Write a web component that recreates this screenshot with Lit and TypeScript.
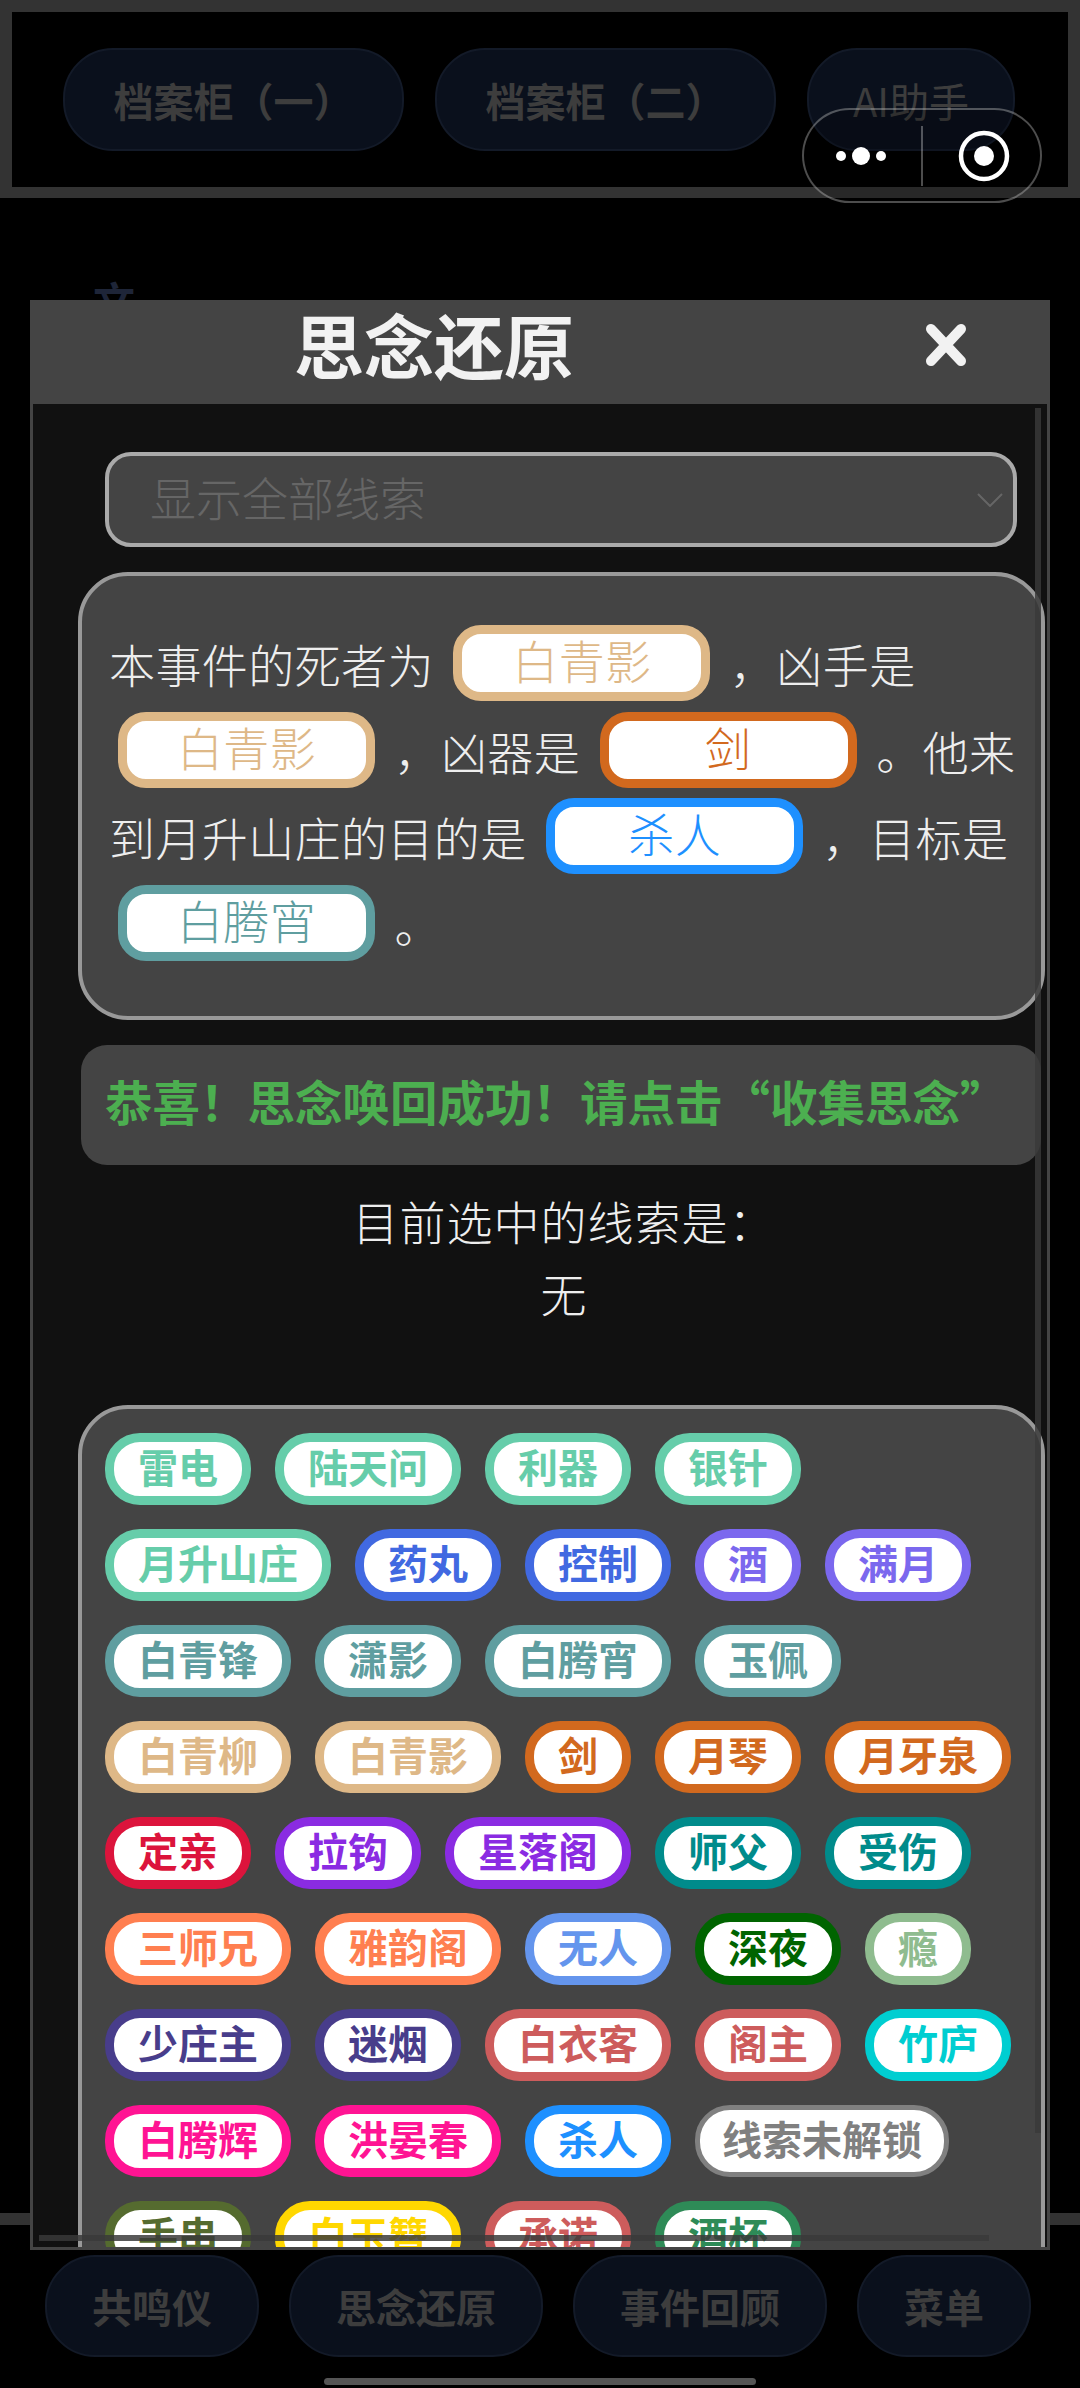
import { LitElement, html, css } from "lit";
import { customElement } from "lit/decorators.js";
import { classMap } from "lit/directives/class-map.js";

type Tag = [string, string];
const G = "#66cdaa", RB = "#4169e1", MS = "#7b68ee", CB = "#5f9ea0", BW = "#deb887", CH = "#d2691e",
  CR = "#dc143c", BV = "#8a2be2", DC = "#008b8b", CO = "#ff7f50", CF = "#6495ed", DG = "#006400",
  DS = "#8fbc8f", DB = "#483d8b", IR = "#cd5c5c", DT = "#00ced1", DP = "#ff1493", DD = "#1e90ff",
  GR = "#808080", OL = "#556b2f", GO = "#ffd700", SG = "#2e8b57";

const TAGS: Tag[] = [
  ["雷电", G], ["陆天问", G], ["利器", G], ["银针", G],
  ["月升山庄", G], ["药丸", RB], ["控制", RB], ["酒", MS], ["满月", MS],
  ["白青锋", CB], ["潇影", CB], ["白腾宵", CB], ["玉佩", CB],
  ["白青柳", BW], ["白青影", BW], ["剑", CH], ["月琴", CH], ["月牙泉", CH],
  ["定亲", CR], ["拉钩", BV], ["星落阁", BV], ["师父", DC], ["受伤", DC],
  ["三师兄", CO], ["雅韵阁", CO], ["无人", CF], ["深夜", DG], ["瘾", DS],
  ["少庄主", DB], ["迷烟", DB], ["白衣客", IR], ["阁主", IR], ["竹庐", DT],
  ["白腾辉", DP], ["洪晏春", DP], ["杀人", DD], ["线索未解锁", GR],
  ["手串", OL], ["白玉簪", GO], ["承诺", IR], ["酒杯", SG],
];

@customElement("app-root")
export class AppRoot extends LitElement {
  static styles = css`
    :host {
      display: block;
      position: relative;
      width: 1080px;
      height: 2388px;
      overflow: hidden;
      background: #000;
      font-family: "Noto Sans CJK SC", "Noto Sans", sans-serif;
      text-spacing-trim: space-all;
    }
    .page { display: flex; flex-direction: column; height: 100%; }
    .top {
      box-sizing: border-box;
      height: 198px;
      border: 12px solid #333;
      border-bottom-width: 11px;
      display: flex;
      gap: 31px;
      padding: 36px 0 0 51px;
      flex: none;
    }
    .nav-pill {
      box-sizing: border-box;
      height: 103px;
      display: flex;
      align-items: center;
      justify-content: center;
      background: #0a101c;
      border: 2px solid #131a28;
      border-radius: 50px;
      color: #3d3d3d;
      font-size: 40px;
      font-weight: 700;
      white-space: nowrap;
    }
    .top .nav-pill { padding: 0 48.5px; }
    .top .nav-pill.ai { padding: 0 44px; font-weight: 400; }
    .mid { flex: 1; position: relative; }
    .frag {
      position: absolute;
      left: 93px;
      top: 72px;
      font-size: 42px;
      line-height: 60px;
      font-weight: 700;
      color: #1e2538;
    }
    .bottom {
      box-sizing: border-box;
      flex: none;
      height: 175px;
      border-top: 12px solid #333;
      display: flex;
      gap: 30px;
      padding: 30px 0 0 45px;
    }
    .bottom .nav-pill { padding: 0 45px; height: 102px; }

    .capsule {
      position: absolute;
      box-sizing: border-box;
      left: 802px;
      top: 108px;
      width: 240px;
      height: 95px;
      border: 2px solid rgba(255, 255, 255, 0.3);
      border-radius: 48px;
      background: rgba(0, 0, 0, 0.2);
    }
    .capsule svg { position: absolute; left: -2px; top: -2px; }

    .modal {
      position: absolute;
      box-sizing: border-box;
      left: 30px;
      top: 300px;
      width: 1020px;
      height: 1950px;
      border: 3px solid #444;
      border-top: 0;
      background: #111;
      display: flex;
      flex-direction: column;
    }
    .head {
      flex: none;
      height: 104px;
      margin: 0 -3px;
      background: #444;
      display: grid;
      grid-template-columns: 808px 1fr;
      align-items: center;
    }
    .title {
      text-align: center;
      font-size: 70px;
      line-height: 88px;
      padding-bottom: 16px;
      font-weight: 700;
      color: #f2f2f2;
    }
    .close { display: flex; justify-content: center; padding: 0 0 14px 4px; }
    .scroll {
      flex: 1;
      position: relative;
      overflow: hidden;
      padding: 48px 0 0 45px;
    }
    .select {
      box-sizing: border-box;
      width: 912px;
      height: 95px;
      margin-left: 27px;
      border: 4px solid #aaa;
      border-radius: 26px;
      background: #444;
      color: #666;
      font-size: 46px;
      font-weight: 300;
      display: flex;
      align-items: center;
      justify-content: space-between;
      padding: 0 10px 0 41px;
    }
    .select span { position: relative; top: -4px; }
    .card {
      box-sizing: border-box;
      width: 967px;
      border: 4px solid #999;
      border-radius: 50px;
      background: #444;
    }
    .story {
      margin-top: 25px;
      height: 448px;
      padding: 44px 12px 0 27px;
      font-size: 46px;
      font-weight: 300;
      letter-spacing: 0.4px;
      line-height: 86.5px;
      color: #eee;
    }
    .slot {
      box-sizing: border-box;
      display: inline-block;
      vertical-align: top;
      width: 257px;
      height: 76px;
      margin: 5px 9px;
      border: 9px solid var(--c);
      border-radius: 28px;
      background: #fff;
      color: var(--c);
      text-align: center;
      line-height: 50px;
      font-size: 46px;
    }
    .notice {
      box-sizing: border-box;
      margin: 25px 0 0 3px;
      width: 960px;
      height: 120px;
      border-radius: 26px;
      background: #444;
      color: #4caf50;
      font-size: 47.5px;
      line-height: 112px;
      font-weight: 700;
      padding-left: 24px;
      white-space: nowrap;
    }
    .q { display: inline-block; width: 1em; text-align: center; }
    .picked {
      width: 972px;
      margin-top: 19px;
      text-align: center;
      color: #eee;
      font-size: 46px;
      font-weight: 300;
      letter-spacing: 1px;
      line-height: 72px;
    }
    .clues {
      margin-top: 77px;
      display: flex;
      flex-wrap: wrap;
      align-content: flex-start;
      gap: 24px;
      padding: 24px 21px 60px 23px;
    }
    .tag {
      box-sizing: border-box;
      height: 72px;
      padding: 0 24px;
      border: 9px solid var(--c);
      border-radius: 35px;
      background: #fff;
      color: var(--c);
      font-size: 40px;
      font-weight: 700;
      line-height: 48px;
      white-space: nowrap;
    }
    .tag.locked {
      border-width: 5px;
      padding: 0 22px;
      line-height: 56px;
    }
    .vbar {
      position: absolute;
      right: 6px;
      top: 4px;
      width: 6px;
      height: 1725px;
      background: rgba(57, 57, 57, 0.84);
    }
    .hbar {
      position: absolute;
      left: 6px;
      bottom: 6px;
      width: 950px;
      height: 6px;
      background: rgba(57, 57, 57, 0.84);
    }
    .home {
      position: absolute;
      left: 324px;
      top: 2378px;
      width: 432px;
      height: 7px;
      border-radius: 4px;
      background: #555;
    }
  `;

  private slot_(text: string, c: string) {
    return html`<span class="slot" style="--c:${c}">${text}</span>`;
  }

  render() {
    return html`
      <div class="page" lang="zh-CN">
        <div class="top">
          <div class="nav-pill">档案柜（一）</div>
          <div class="nav-pill">档案柜（二）</div>
          <div class="nav-pill ai">AI助手</div>
        </div>
        <div class="mid"><span class="frag">文</span></div>
        <div class="bottom">
          <div class="nav-pill">共鸣仪</div>
          <div class="nav-pill">思念还原</div>
          <div class="nav-pill">事件回顾</div>
          <div class="nav-pill">菜单</div>
        </div>
      </div>

      <div class="capsule">
        <svg width="240" height="95" viewBox="0 0 240 95">
          <circle cx="39" cy="48" r="5" fill="#fff"></circle>
          <circle cx="59" cy="48" r="9" fill="#fff"></circle>
          <circle cx="79" cy="48" r="5" fill="#fff"></circle>
          <rect x="119" y="18" width="2" height="60" fill="rgba(255,255,255,0.3)"></rect>
          <circle cx="182" cy="48" r="23" fill="none" stroke="#fff" stroke-width="4.5"></circle>
          <circle cx="182" cy="48" r="10" fill="#fff"></circle>
        </svg>
      </div>

      <div class="modal" lang="zh-CN">
        <div class="head">
          <div class="title">思念还原</div>
          <div class="close">
            <svg width="42" height="42" viewBox="0 0 42 42">
              <path d="M6 5 L36 37 M36 5 L6 37" stroke="#f2f2f2" stroke-width="10" stroke-linecap="round" fill="none"></path>
            </svg>
          </div>
        </div>
        <div class="scroll">
          <div class="select">
            <span>显示全部线索</span>
            <svg width="26" height="14" viewBox="0 0 26 14">
              <path d="M1 1 L13 13 L25 1" fill="none" stroke="#666" stroke-width="2"></path>
            </svg>
          </div>
          <div class="card story">
            本事件的死者为 ${this.slot_("白青影", BW)} ，凶手是
            ${this.slot_("白青影", BW)} ，凶器是 ${this.slot_("剑", CH)} 。他来到月升山庄的目的是 ${this.slot_("杀人", DD)} ，目标是
            ${this.slot_("白腾宵", CB)} 。
          </div>
          <div class="notice">恭喜！思念唤回成功！请点击<span class="q">“</span>收集思念<span class="q">”</span></div>
          <div class="picked">目前选中的线索是：<br />无</div>
          <div class="card clues">
            ${TAGS.map(([t, c]) => html`<span class=${classMap({ tag: true, locked: c === GR })} style="--c:${c}">${t}</span>`)}
          </div>
          <div class="vbar"></div>
          <div class="hbar"></div>
        </div>
      </div>
      <div class="home"></div>
    `;
  }
}
